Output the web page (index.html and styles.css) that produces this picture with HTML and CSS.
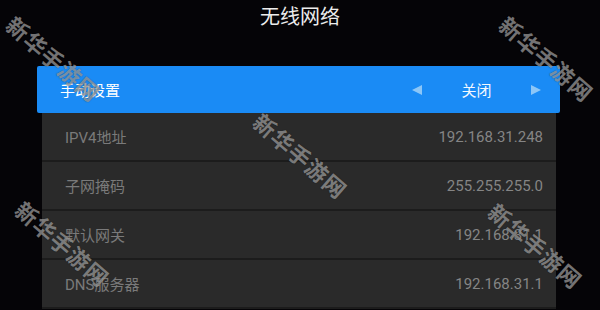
FILE: index.html
```html
<!DOCTYPE html>
<html lang="zh">
<head>
<meta charset="utf-8">
<title>无线网络</title>
<link rel="stylesheet" href="styles.css">
</head>
<body>
<div class="screen">
  <div class="title">无线网络</div>
  <div class="list">
    <div class="row active">
      <span class="label">手动设置</span>
      <div class="selector">
        <span class="tri tri-left"></span>
        <span class="value">关闭</span>
        <span class="tri tri-right"></span>
      </div>
    </div>
    <div class="row item"><span class="label">IPV4地址</span><span class="val">192.168.31.248</span></div>
    <div class="row item"><span class="label">子网掩码</span><span class="val">255.255.255.0</span></div>
    <div class="row item"><span class="label">默认网关</span><span class="val">192.168.31.1</span></div>
    <div class="row item"><span class="label">DNS服务器</span><span class="val">192.168.31.1</span></div>
  </div>
  <div class="wm wm1">新华手游网</div>
  <div class="wm wm2">新华手游网</div>
  <div class="wm wm3">新华手游网</div>
  <div class="wm wm4">新华手游网</div>
  <div class="wm wm5">新华手游网</div>
</div>
</body>
</html>
```
FILE: styles.css
```css
html, body {
  margin: 0;
  padding: 0;
  background: #050407;
}
.screen {
  position: relative;
  width: 600px;
  height: 310px;
  overflow: hidden;
  background: #050407;
  font-family: Roboto, "Noto Sans CJK SC", sans-serif;
}
.title {
  height: 32px;
  line-height: 32px;
  text-align: center;
  color: #ececec;
  font-size: 20px;
  font-family: "Noto Sans CJK SC", sans-serif;
}
.list {
  margin: 34px 0 0 37px;
  width: 523px;
}
.row {
  display: flex;
  align-items: center;
  justify-content: space-between;
  box-sizing: border-box;
  font-size: 15px;
}
.active {
  height: 47px;
  background: #1a8bf5;
  border-radius: 2px;
  padding: 0 19px 0 23px;
  color: #ffffff;
}
.selector {
  display: flex;
  align-items: center;
}
.tri {
  width: 0;
  height: 0;
  border-top: 5px solid transparent;
  border-bottom: 5px solid transparent;
}
.tri-left {
  border-right: 10px solid #8cc6f7;
}
.tri-right {
  border-left: 10px solid #8cc6f7;
}
.value {
  width: 109px;
  text-align: center;
  color: #f2f8ff;
}
.item {
  height: 49px;
  margin: 0 4px 0 5px;
  background: #2a2a2a;
  border-bottom: 2px solid #1c1c1c;
  padding: 0 13px 0 23px;
  color: #7a7a7a;
}
.item .val {
  color: #858585;
}
.wm {
  position: absolute;
  font-family: "Noto Sans CJK SC", sans-serif;
  font-weight: bold;
  font-size: 22px;
  letter-spacing: 1px;
  color: rgba(205, 205, 205, 0.55);
  text-shadow: 0 0 1px rgba(20, 20, 20, 0.6);
  white-space: nowrap;
  transform: translate(-50%, -50%) rotate(41deg);
}
.wm1 { left: 54px; top: 58px; }
.wm2 { left: 301px; top: 155px; }
.wm3 { left: 547px; top: 58px; }
.wm4 { left: 63px; top: 243px; }
.wm5 { left: 536px; top: 245px; }
```
